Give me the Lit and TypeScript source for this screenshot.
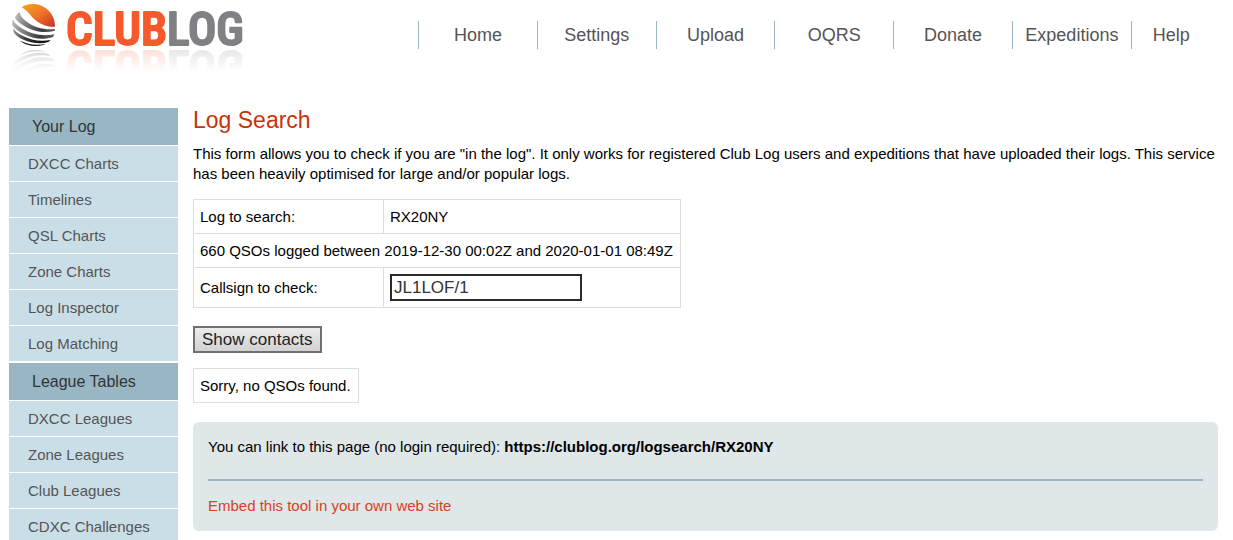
import { LitElement, html, css, svg } from "lit";
import { customElement, property } from "lit/decorators.js";

interface MenuGroup {
  title: string;
  items: string[];
}

const NAV = ["Home", "Settings", "Upload", "OQRS", "Donate", "Expeditions", "Help"];

const MENU: MenuGroup[] = [
  {
    title: "Your Log",
    items: ["DXCC Charts", "Timelines", "QSL Charts", "Zone Charts", "Log Inspector", "Log Matching"],
  },
  {
    title: "League Tables",
    items: ["DXCC Leagues", "Zone Leagues", "Club Leagues", "CDXC Challenges"],
  },
];

@customElement("club-logo")
class ClubLogo extends LitElement {
  static styles = css`
    :host {
      display: block;
    }
    .logo {
      display: block;
      overflow: visible;
      -webkit-box-reflect: below 0 linear-gradient(transparent 50%, rgba(0, 0, 0, 0.2));
    }
    .word {
      font-family: "Roboto Condensed", "Open Sans Condensed", Roboto, sans-serif;
      font-weight: 500;
      font-size: 47px;
      stroke-width: 2;
      stroke-linejoin: round;
    }
    .club {
      fill: #f6592b;
      stroke: #f6592b;
    }
    .log {
      fill: #808184;
      stroke: #808184;
    }
  `;

  render() {
    return html`<svg class="logo" width="240" height="48" viewBox="9 0 240 48" role="img" aria-label="Club Log">
      ${svg`
        <defs>
          <linearGradient id="sun" x1="0" y1="0" x2="1" y2="1">
            <stop offset="0" stop-color="#f9a51a" />
            <stop offset="0.5" stop-color="#ee7326" />
            <stop offset="1" stop-color="#c9302c" />
          </linearGradient>
          <linearGradient id="band" x1="0" y1="0" x2="1" y2="0.2">
            <stop offset="0" stop-color="#c4c4c4" />
            <stop offset="0.3" stop-color="#8a8a8a" />
            <stop offset="0.8" stop-color="#3c3c3c" />
            <stop offset="1" stop-color="#555" />
          </linearGradient>
          <linearGradient id="dark" x1="0" y1="0" x2="1" y2="0.2">
            <stop offset="0" stop-color="#999" />
            <stop offset="0.5" stop-color="#333" />
            <stop offset="1" stop-color="#111" />
          </linearGradient>
        </defs>
        <path fill="url(#sun)" d="M21.700 7.500C24 5 29 3.600 34 4C45 4.500 55.500 14 55 26.800C46 27 39 23.500 33 18C30 14.500 27 10 21.700 7.500Z" />
        <path fill="url(#band)" d="M19.500 12C20 16 23 19 27 22C35 28 45 30 55 29L54.800 30.800C45 33.500 33 31.500 25 26.500C21 24 17 21.500 15 18C15.500 15.500 17.500 13.500 19.500 12Z" />
        <path fill="url(#band)" d="M13 19.500C14.500 23.500 18 26 22 28.500C32 34.500 43 36.500 54.300 34.200L53 37C43 40.500 32 38.500 23 33.800C18 31 14 28 12.500 25.500C12 23.500 12.300 21.500 13 19.500Z" />
        <path fill="url(#dark)" d="M13 28.500C15 31 18 33.500 22 35.500C31 40.500 41 41.700 50.500 40L48.500 42C40 44.500 30 42.800 23 39.500C18.500 37.500 15 35 13.500 31.500Z" />
        <path fill="#222" d="M19.500 40.500C28 44.500 36 45.500 45.500 44C39 47.300 27 47 19.500 40.500Z" />
      `}
      <text class="word" x="66" y="45"><tspan class="club">CLUB</tspan><tspan class="log">LOG</tspan></text>
    </svg>`;
  }
}

@customElement("side-menu")
class SideMenu extends LitElement {
  @property({ attribute: false }) groups: MenuGroup[] = [];

  static styles = css`
    :host {
      display: block;
    }
    .title {
      margin: 0;
      padding-left: 23px;
      font-size: 16px;
      font-weight: normal;
      line-height: 37px;
      color: #333;
      background: #98b6c3;
      border-bottom: 1px solid #fff;
    }
    .list {
      margin: 0;
      padding: 0 0 1px;
      list-style: none;
    }
    .link {
      display: block;
      padding-left: 19px;
      font-size: 15px;
      line-height: 35px;
      color: #555;
      background: #cadee7;
      border-bottom: 1px solid #fff;
      text-decoration: none;
    }
  `;

  render() {
    return html`<nav aria-label="Sections">
      ${this.groups.map(
        (g) => html`<h2 class="title">${g.title}</h2>
          <ul class="list">
            ${g.items.map((i) => html`<li><a class="link" href="#">${i}</a></li>`)}
          </ul>`
      )}
    </nav>`;
  }
}

@customElement("app-root")
class AppRoot extends LitElement {
  static styles = css`
    :host {
      display: block;
      height: 100vh;
      overflow: hidden;
      background: #fff;
      color: #000;
      font-family: "Liberation Sans", Arial, sans-serif;
      font-size: 15px;
      line-height: 20px;
    }
    .header {
      display: flex;
      justify-content: space-between;
      align-items: flex-start;
      height: 108px;
      padding: 0 22px 0 9px;
    }
    .nav {
      display: flex;
      flex: 0 0 793px;
      margin-top: 21px;
    }
    .nav-link {
      flex: 119 1 0;
      box-sizing: border-box;
      border-left: 1px solid #98b6c3;
      text-align: center;
      font-size: 18px;
      line-height: 28px;
      color: #555;
      text-decoration: none;
    }
    .nav-link:last-child {
      flex-grow: 80;
    }
    .body {
      display: grid;
      grid-template-columns: 169px 1fr;
      column-gap: 15px;
      padding: 0 15px 0 9px;
    }
    .heading {
      margin: 0 0 12px;
      font-size: 23px;
      font-weight: normal;
      line-height: 24px;
      color: #c9330a;
    }
    .intro {
      margin: 0 0 15px;
    }
    .grid {
      border-collapse: collapse;
    }
    .cell {
      padding: 6px 7px 6px 6px;
      height: 21px;
      border: 1px solid #ddd;
      text-align: left;
      font-weight: normal;
    }
    .label {
      width: 176px;
    }
    .input {
      display: block;
      box-sizing: border-box;
      width: 192px;
      height: 27px;
      padding: 0 2px;
      border: 2px solid #2a2a2a;
      border-radius: 0;
      background: #fff;
      color: #333;
      font: 17px "Liberation Sans", Arial, sans-serif;
    }
    .button {
      display: block;
      box-sizing: border-box;
      height: 27px;
      margin: 18px 0 15px;
      padding: 0 7px;
      border: 2px solid #707070;
      border-radius: 0;
      background: linear-gradient(#ececec, #d2d2d2);
      color: #222;
      font: 17px "Liberation Sans", Arial, sans-serif;
    }
    .info {
      margin-top: 19px;
      padding: 15px;
      border-radius: 6px;
      background: #dfe7e9;
    }
    .info-text {
      margin: 0;
    }
    .rule {
      margin: 22px 0 15px;
      border: 0;
      border-top: 2px solid #98b6c3;
    }
    .embed {
      color: #d9401f;
      text-decoration: none;
    }
  `;

  render() {
    return html`
      <header class="header">
        <club-logo></club-logo>
        <nav class="nav" aria-label="Main">
          ${NAV.map((n) => html`<a class="nav-link" href="#">${n}</a>`)}
        </nav>
      </header>
      <div class="body">
        <side-menu .groups=${MENU}></side-menu>
        <main>
          <h1 class="heading">Log Search</h1>
          <p class="intro">
            This form allows you to check if you are "in the log". It only works for registered Club Log users and
            expeditions that have uploaded their logs. This service has been heavily optimised for large and/or popular
            logs.
          </p>
          <form @submit=${(e: Event) => e.preventDefault()}>
            <table class="grid">
              <tr>
                <th class="cell label" scope="row">Log to search:</th>
                <td class="cell">RX20NY</td>
              </tr>
              <tr>
                <td class="cell" colspan="2">660 QSOs logged between 2019-12-30 00:02Z and 2020-01-01 08:49Z</td>
              </tr>
              <tr>
                <th class="cell label" scope="row"><label for="call">Callsign to check:</label></th>
                <td class="cell"><input class="input" id="call" type="text" value="JL1LOF/1" /></td>
              </tr>
            </table>
            <button class="button" type="submit">Show contacts</button>
          </form>
          <table class="grid">
            <tr>
              <td class="cell">Sorry, no QSOs found.</td>
            </tr>
          </table>
          <section class="info">
            <p class="info-text">
              You can link to this page (no login required): <strong>https://clublog.org/logsearch/RX20NY</strong>
            </p>
            <hr class="rule" />
            <p class="info-text"><a class="embed" href="#">Embed this tool in your own web site</a></p>
          </section>
        </main>
      </div>
    `;
  }
}
